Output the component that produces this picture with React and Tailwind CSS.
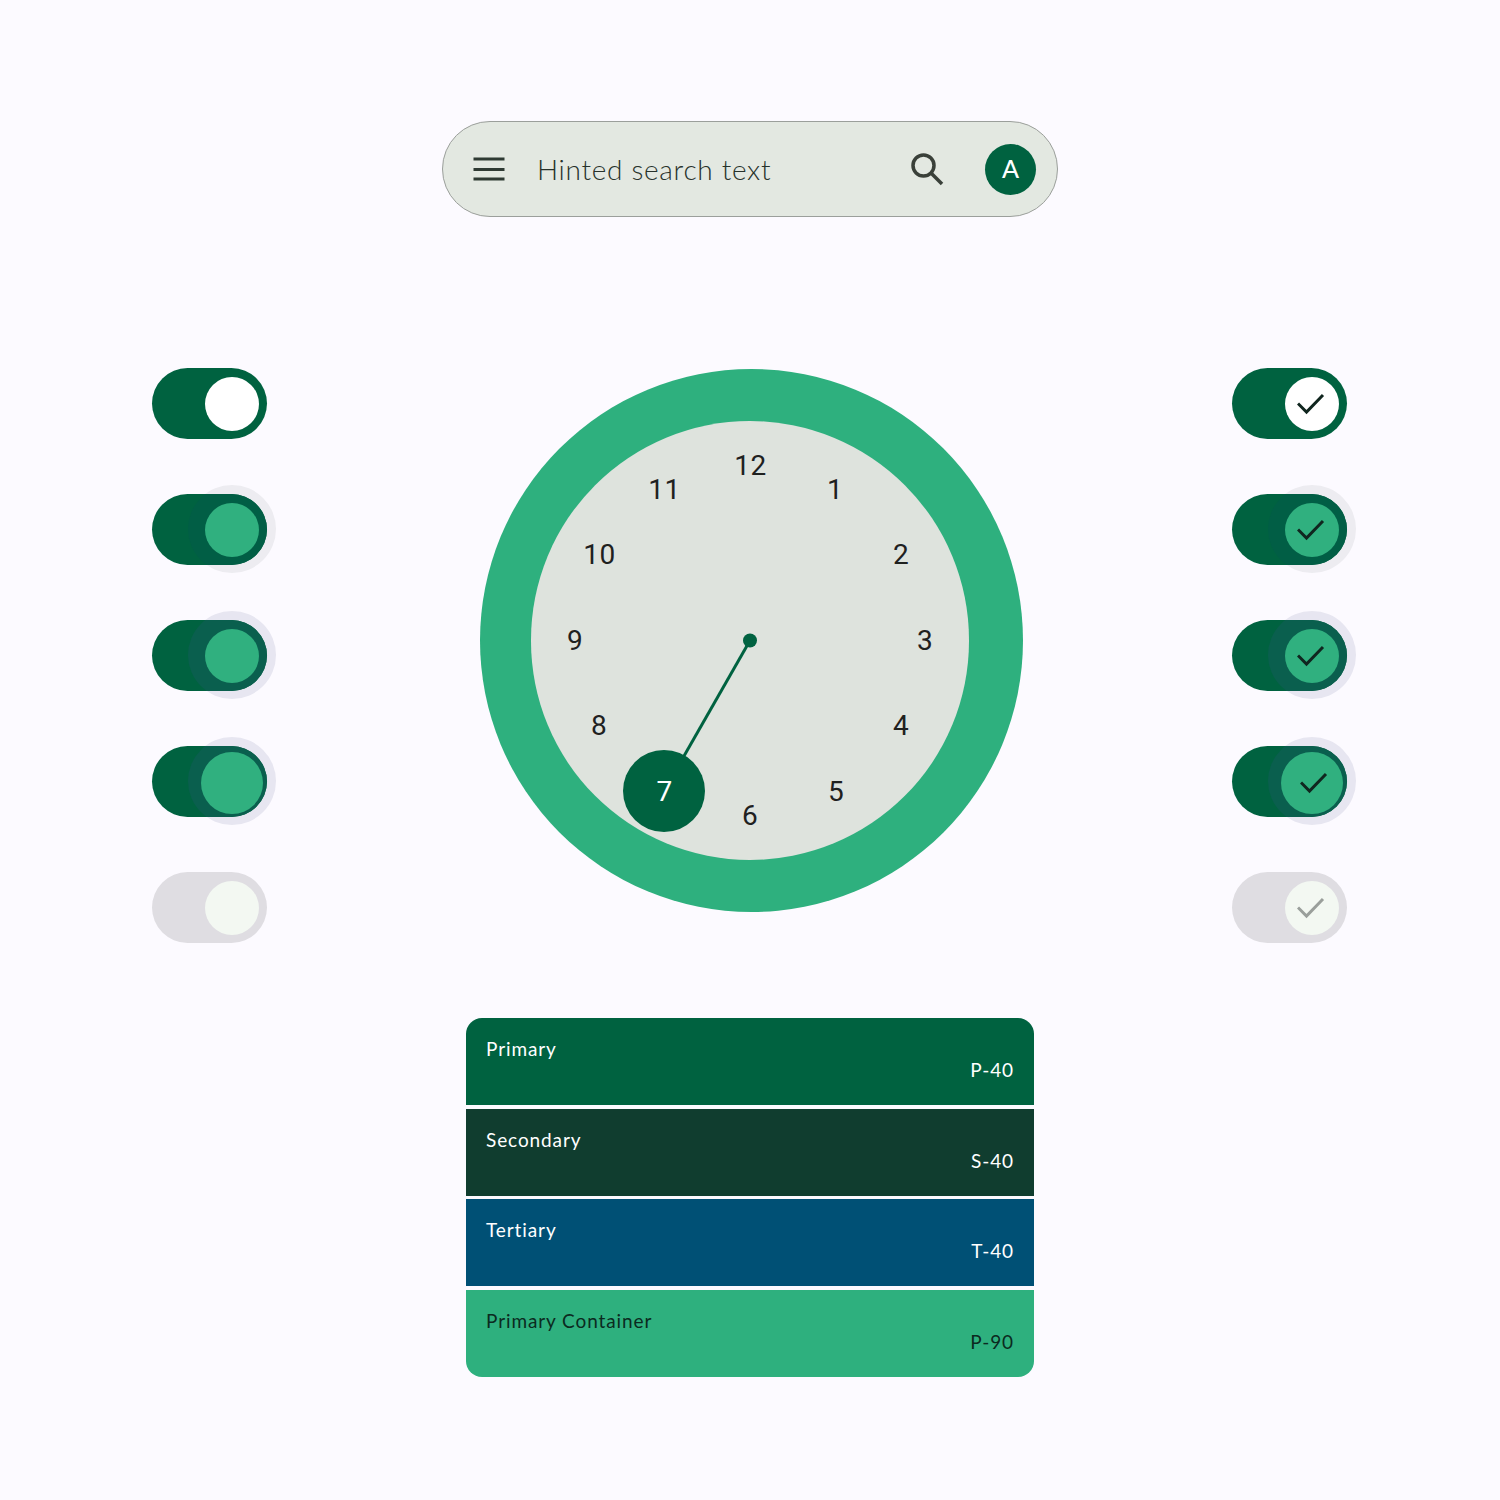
const switches = [
  { halo: '', overlay: '', thumb: 'bg-white', big: false },
  { halo: 'bg-[#edecf1]', overlay: 'bg-[#015e45]', thumb: 'bg-[#30b07f]', big: false },
  { halo: 'bg-[#e7e6f1]', overlay: 'bg-[#0a5f4e]', thumb: 'bg-[#30b07f]', big: false },
  { halo: 'bg-[#e7e6f1]', overlay: 'bg-[#0a5f4e]', thumb: 'bg-[#30b07f]', big: true },
  { disabled: true, halo: '', overlay: '', thumb: 'bg-[#f3f8f2]', big: false },
];

const rows = [
  { name: 'Primary', tone: 'P-40', cls: 'bg-[#006240] text-white rounded-t-2xl' },
  { name: 'Secondary', tone: 'S-40', cls: 'bg-[#103d2f] text-white' },
  { name: 'Tertiary', tone: 'T-40', cls: 'bg-[#005075] text-white' },
  { name: 'Primary Container', tone: 'P-90', cls: 'bg-[#2eb07e] text-[#0b2a1f] rounded-b-2xl' },
];

// dial numbers, centre of each glyph measured from the face's top left corner
const hours = [
  { n: 12, x: 219.5, y: 45 },
  { n: 1, x: 304, y: 69 },
  { n: 2, x: 370, y: 134 },
  { n: 3, x: 394, y: 220 },
  { n: 4, x: 370, y: 305 },
  { n: 5, x: 305, y: 371 },
  { n: 6, x: 219, y: 395 },
  { n: 7, x: 133.5, y: 371 },
  { n: 8, x: 68, y: 305 },
  { n: 9, x: 44, y: 220 },
  { n: 10, x: 68.5, y: 134 },
  { n: 11, x: 133.5, y: 69 },
];

function Switch({ item, check }) {
  return (
    <div className="relative w-[115px] h-[71px]">
      {item.halo && <div className={`absolute left-[36px] top-[-9px] w-[88px] h-[88px] rounded-full ${item.halo}`} />}
      <div className={`absolute inset-0 rounded-full overflow-hidden ${item.disabled ? 'bg-[#dfdde2]' : 'bg-[#006240]'}`}>
        {item.overlay && <div className={`absolute left-[36px] top-[-9px] w-[88px] h-[88px] rounded-full ${item.overlay}`} />}
      </div>
      <div
        className={`absolute rounded-full flex items-center justify-center ${item.thumb} ${
          item.big ? 'left-[49px] top-[6px] w-[62px] h-[62px]' : 'left-[53px] top-[9px] w-[54px] h-[54px]'
        }`}
      >
        {check && (
          <svg className={item.big ? 'ml-[6px]' : ''} width="30" height="24" viewBox="0 0 30 24" fill="none">
            <path
              d="M1 11.5L9.5 20L26 3"
              stroke={item.disabled ? '#9a9f9b' : '#10261f'}
              strokeWidth="3"
            />
          </svg>
        )}
      </div>
    </div>
  );
}

function SwitchColumn({ check, className }) {
  return (
    <div className={`flex flex-col gap-[55px] ${className || ''}`}>
      {switches.map((item, i) => (
        <Switch key={i} item={item} check={check} />
      ))}
    </div>
  );
}

function Clock() {
  return (
    <div className="mt-[1px] ml-[213px] w-[543px] h-[543px] rounded-full bg-[#2eb07e] flex items-center justify-center pr-[3px]">
      <div className="relative w-[438px] h-[439px] rounded-full bg-[#dee3dd] font-['Roboto',sans-serif] text-[28px] text-[#1f211f]">
        <svg className="absolute inset-0" width="438" height="439" viewBox="0 0 438 439">
          <line x1="219" y1="219.5" x2="133" y2="370" stroke="#006240" strokeWidth="3" />
          <circle cx="219" cy="219.5" r="7" fill="#006240" />
          <circle cx="133" cy="370" r="41" fill="#006240" />
        </svg>
        {hours.map((h) => (
          <span
            key={h.n}
            className={`absolute -translate-x-1/2 -translate-y-1/2 leading-none tracking-[0.5px] ${h.n === 7 ? 'text-white' : ''}`}
            style={{ left: h.x, top: h.y }}
          >
            {h.n}
          </span>
        ))}
      </div>
    </div>
  );
}

export default function App() {
  return (
    <div className="w-[1500px] h-[1500px] bg-[#fcfaff] flex flex-col items-center pt-[121px] font-['Lato',sans-serif]">
      <div className="w-[616px] h-[96px] rounded-full bg-[#e3e8e1] border-[1.5px] border-[#9b9f9b] flex items-center pl-[30px] pr-[21px]">
        <svg width="32" height="24" viewBox="0 0 32 24" fill="none" stroke="#2f3a33" strokeWidth="3">
          <path d="M0.5 2H31.5M0.5 12.5H31.5M0.5 22H31.5" />
        </svg>
        <span className="ml-[32px] text-[28px] font-light tracking-[0.7px] text-[#27322b]">Hinted search text</span>
        <svg className="ml-auto" width="34" height="34" viewBox="0 0 34 34" fill="none" stroke="#3a4039" strokeWidth="3.5">
          <circle cx="13.5" cy="13.5" r="10.5" />
          <path d="M21 21L32 32" />
        </svg>
        <div className="ml-[41px] w-[51px] h-[51px] rounded-full bg-[#006240] text-white flex items-center justify-center text-[25px] font-medium">
          A
        </div>
      </div>

      <div className="mt-[151px] w-[1195px] mr-[1px] flex items-start">
        <SwitchColumn />
        <Clock />
        <SwitchColumn check className="ml-auto" />
      </div>

      <div className="mt-[75px] w-[568px] flex flex-col gap-[3.5px]">
        {rows.map((r) => (
          <div key={r.name} className={`h-[87px] flex flex-col px-[20px] pt-[19px] text-[19px] tracking-[0.9px] leading-[24px] ${r.cls}`}>
            <div>{r.name}</div>
            <div className="self-end mt-[-3px] text-right">{r.tone}</div>
          </div>
        ))}
      </div>
    </div>
  );
}
